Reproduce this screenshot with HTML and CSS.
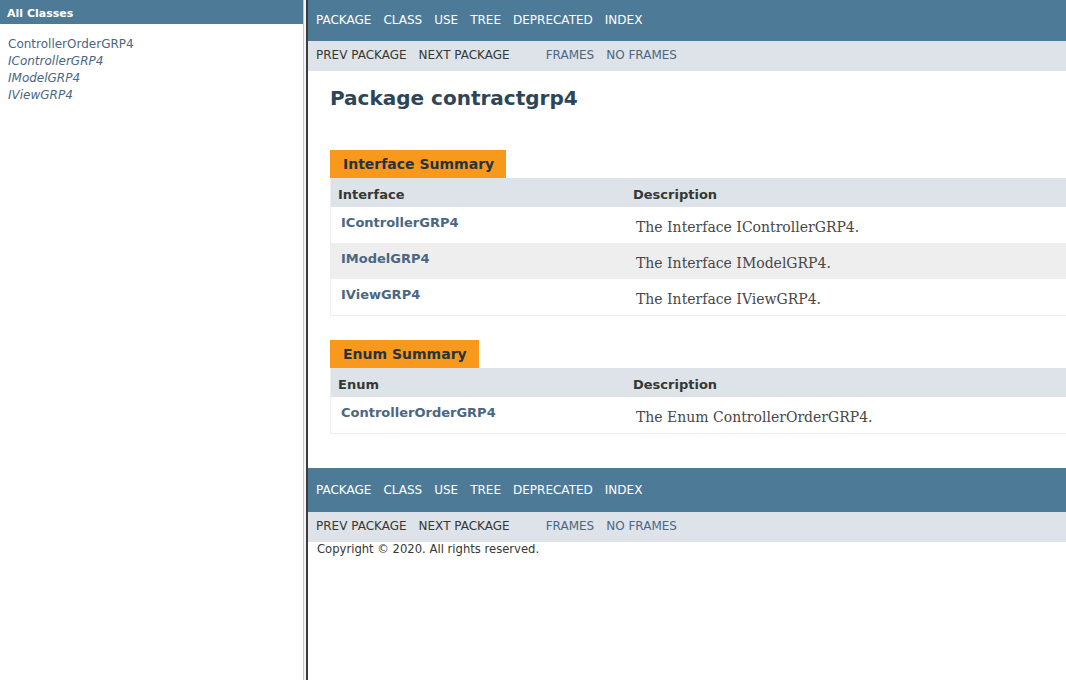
FILE: index.html
```
<!DOCTYPE html>
<html>
<head>
<meta charset="utf-8">
<title>contractgrp4</title>
<link rel="stylesheet" href="styles.css">
</head>
<body>
<div class="frames">
  <div class="left-frame">
    <h1 class="bar">All Classes</h1>
    <div class="index-container">
      <ul>
        <li><a href="#">ControllerOrderGRP4</a></li>
        <li><a href="#" class="iface">IControllerGRP4</a></li>
        <li><a href="#" class="iface">IModelGRP4</a></li>
        <li><a href="#" class="iface">IViewGRP4</a></li>
      </ul>
    </div>
  </div>
  <div class="frame-border"></div>
  <div class="right-frame">
    <div class="top-nav">
      <ul class="nav-list">
        <li>Package</li>
        <li><a href="#">Class</a></li>
        <li><a href="#">Use</a></li>
        <li><a href="#">Tree</a></li>
        <li><a href="#">Deprecated</a></li>
        <li><a href="#">Index</a></li>
      </ul>
    </div>
    <div class="sub-nav">
      <ul class="nav-list">
        <li>Prev Package</li>
        <li>Next Package</li>
      </ul>
      <ul class="nav-list">
        <li><a href="#">Frames</a></li>
        <li><a href="#">No Frames</a></li>
      </ul>
    </div>
    <div class="header">
      <h1 class="title">Package contractgrp4</h1>
    </div>
    <div class="content-container">
      <table class="type-summary">
        <caption><span>Interface Summary</span></caption>
        <tr>
          <th class="col-first">Interface</th>
          <th class="col-last">Description</th>
        </tr>
        <tr class="row-color">
          <td class="col-first"><a href="#">IControllerGRP4</a></td>
          <td class="col-last"><div class="block">The Interface IControllerGRP4.</div></td>
        </tr>
        <tr class="alt-color">
          <td class="col-first"><a href="#">IModelGRP4</a></td>
          <td class="col-last"><div class="block">The Interface IModelGRP4.</div></td>
        </tr>
        <tr class="row-color">
          <td class="col-first"><a href="#">IViewGRP4</a></td>
          <td class="col-last"><div class="block">The Interface IViewGRP4.</div></td>
        </tr>
      </table>
      <table class="type-summary second">
        <caption><span>Enum Summary</span></caption>
        <tr>
          <th class="col-first">Enum</th>
          <th class="col-last">Description</th>
        </tr>
        <tr class="row-color">
          <td class="col-first"><a href="#">ControllerOrderGRP4</a></td>
          <td class="col-last"><div class="block">The Enum ControllerOrderGRP4.</div></td>
        </tr>
      </table>
    </div>
    <div class="bottom-nav">
      <ul class="nav-list">
        <li>Package</li>
        <li><a href="#">Class</a></li>
        <li><a href="#">Use</a></li>
        <li><a href="#">Tree</a></li>
        <li><a href="#">Deprecated</a></li>
        <li><a href="#">Index</a></li>
      </ul>
    </div>
    <div class="sub-nav">
      <ul class="nav-list">
        <li>Prev Package</li>
        <li>Next Package</li>
      </ul>
      <ul class="nav-list">
        <li><a href="#">Frames</a></li>
        <li><a href="#">No Frames</a></li>
      </ul>
    </div>
    <p class="legal-copy">Copyright © 2020. All rights reserved.</p>
  </div>
</div>
</body>
</html>
```
FILE: styles.css
```
html, body {
  margin: 0;
  padding: 0;
  background: #ffffff;
}
body {
  font-family: "DejaVu Sans", Arial, sans-serif;
  font-size: 14px;
  color: #353833;
}
a {
  color: #4A6782;
  text-decoration: none;
}
.frames {
  display: flex;
  width: 1066px;
  height: 680px;
  overflow: hidden;
}
.left-frame {
  width: 303px;
  flex: none;
  background: #ffffff;
}
.bar {
  margin: 0;
  height: 24px;
  box-sizing: border-box;
  padding: 7px 0 0 7px;
  background: #4D7A97;
  color: #ffffff;
  font-size: 11px;
  line-height: 13px;
  font-weight: bold;
}
.index-container {
  margin: 10px 8px;
  font-size: 12px;
}
.index-container ul {
  list-style: none;
  margin: 0;
  padding: 0;
}
.index-container li {
  padding-top: 3px;
  line-height: 14px;
}
.index-container .iface {
  font-style: italic;
}
.frame-border {
  width: 5px;
  flex: none;
  box-sizing: border-box;
  border-left: 1px solid #c4c4c4;
  border-right: 2px solid #3c3c3c;
  background: #f4f4f4;
}
.right-frame {
  flex: 1;
  min-width: 0;
  overflow: hidden;
}
.nav-list {
  list-style: none;
  margin: 0 22px 0 0;
  padding: 0 0 0 2px;
  display: flex;
  font-size: 12px;
  line-height: 14px;
  text-transform: uppercase;
}
.nav-list li {
  padding: 0 6px;
  white-space: nowrap;
}
.top-nav, .bottom-nav {
  background: #4D7A97;
  color: #ffffff;
  display: flex;
  align-items: center;
}
.top-nav a, .bottom-nav a {
  color: #ffffff;
}
.top-nav {
  height: 41px;
  padding-bottom: 1px;
  box-sizing: border-box;
}
.bottom-nav {
  height: 44px;
}
.sub-nav {
  background: #dee3e9;
  height: 30px;
  display: flex;
  align-items: center;
  padding-bottom: 3px;
  box-sizing: border-box;
}
.header {
  margin: 0 22px;
  padding-top: 15px;
}
.title {
  margin: 0;
  font-size: 20px;
  line-height: 24px;
  color: #2c4557;
  font-weight: bold;
}
.content-container {
  padding: 40px 0 34px 22px;
}
.type-summary {
  width: 900px;
  border-collapse: collapse;
  border-left: 1px solid #eeeeee;
  border-bottom: 1px solid #eeeeee;
}
.type-summary.second {
  margin-top: 24px;
}
.type-summary caption {
  text-align: left;
  padding: 0;
}
.type-summary caption span {
  display: inline-block;
  background: #F8981D;
  color: #253441;
  font-weight: bold;
  font-size: 14px;
  line-height: 16px;
  padding: 6px 12px 6px 13px;
  white-space: nowrap;
}
.type-summary th {
  background: #dee3e9;
  text-align: left;
  font-size: 13px;
  font-weight: bold;
  line-height: 18px;
  padding: 8px 3px 3px 7px;
  vertical-align: top;
}
.type-summary th.col-first {
  width: 285px;
}
.type-summary td {
  vertical-align: top;
  padding: 8px 0 3px 10px;
  font-size: 13px;
  line-height: 15px;
  height: 25px;
}
.type-summary td.col-first {
  white-space: nowrap;
  font-weight: bold;
}
.row-color {
  background: #ffffff;
}
.alt-color {
  background: #EEEEEF;
}
.block {
  font-family: "DejaVu Serif", Georgia, "Times New Roman", serif;
  font-size: 14px;
  line-height: 17px;
  color: #474747;
  margin: 4px 10px 0 0;
}
.legal-copy {
  margin: 0;
  padding: 0 0 0 9px;
  font-size: 11.6px;
  line-height: 14px;
  height: 14px;
}
```
